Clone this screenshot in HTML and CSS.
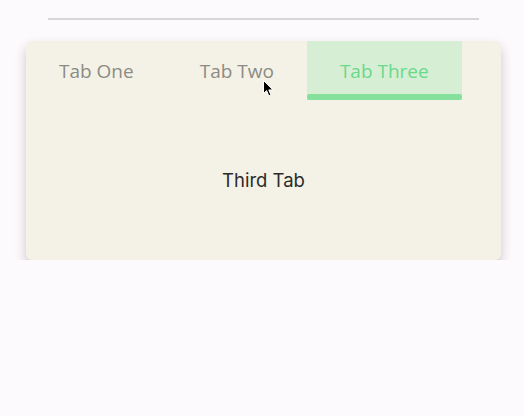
FILE: index.html
```html
<!DOCTYPE html>
<html>
<head>
<meta charset="utf-8">
<link rel="stylesheet" href="styles.css">
</head>
<body>
<div class="page">
  <div class="rule"></div>
  <div class="card">
    <div class="tabs">
      <div class="tab">Tab One</div>
      <div class="tab">Tab Two</div>
      <div class="tab active">Tab Three</div>
    </div>
    <div class="panel">Third Tab</div>
  </div>
</div>
<svg class="cursor" width="12" height="18" viewBox="0 0 12 18">
  <path d="M0.5 0.5 L0.5 13.5 L3.6 10.6 L5.8 15.8 L7.9 14.9 L5.8 9.9 L10 9.9 Z" fill="#000" stroke="#fff" stroke-width="1"/>
</svg>
</body>
</html>
```
FILE: styles.css
```css
html, body {
  margin: 0;
  padding: 0;
  background: #fdfafd;
}
.page {
  padding-top: 18px;
}
.rule {
  height: 2px;
  background: #d7d5d9;
  margin: 0 45px 0 48px;
}
.card {
  margin: 21px 23px 0 26px;
  height: 219px;
  background: #f4f2e6;
  border-radius: 6px;
  box-shadow: 0 6px 12px rgba(40, 30, 50, 0.24);
  display: flex;
  flex-direction: column;
  overflow: hidden;
}
.tabs {
  display: flex;
  height: 59px;
}
.tab {
  position: relative;
  box-sizing: border-box;
  height: 59px;
  padding: 1px 33px 0;
  display: flex;
  align-items: center;
  font-family: "Open Sans", sans-serif;
  font-size: 19px;
  color: #8c8b84;
}
.tab.active {
  background: #d6eed3;
  color: #6ad98b;
}
.tab.active::after {
  content: "";
  position: absolute;
  left: 0;
  right: 0;
  bottom: 0;
  height: 6px;
  border-radius: 2px;
  background: #85e09c;
}
.panel {
  flex: 1;
  display: flex;
  align-items: center;
  justify-content: center;
  font-family: Inter, sans-serif;
  font-size: 18.5px;
  color: #2b2b2b;
}
.cursor {
  position: absolute;
  left: 263px;
  top: 80px;
}
```
